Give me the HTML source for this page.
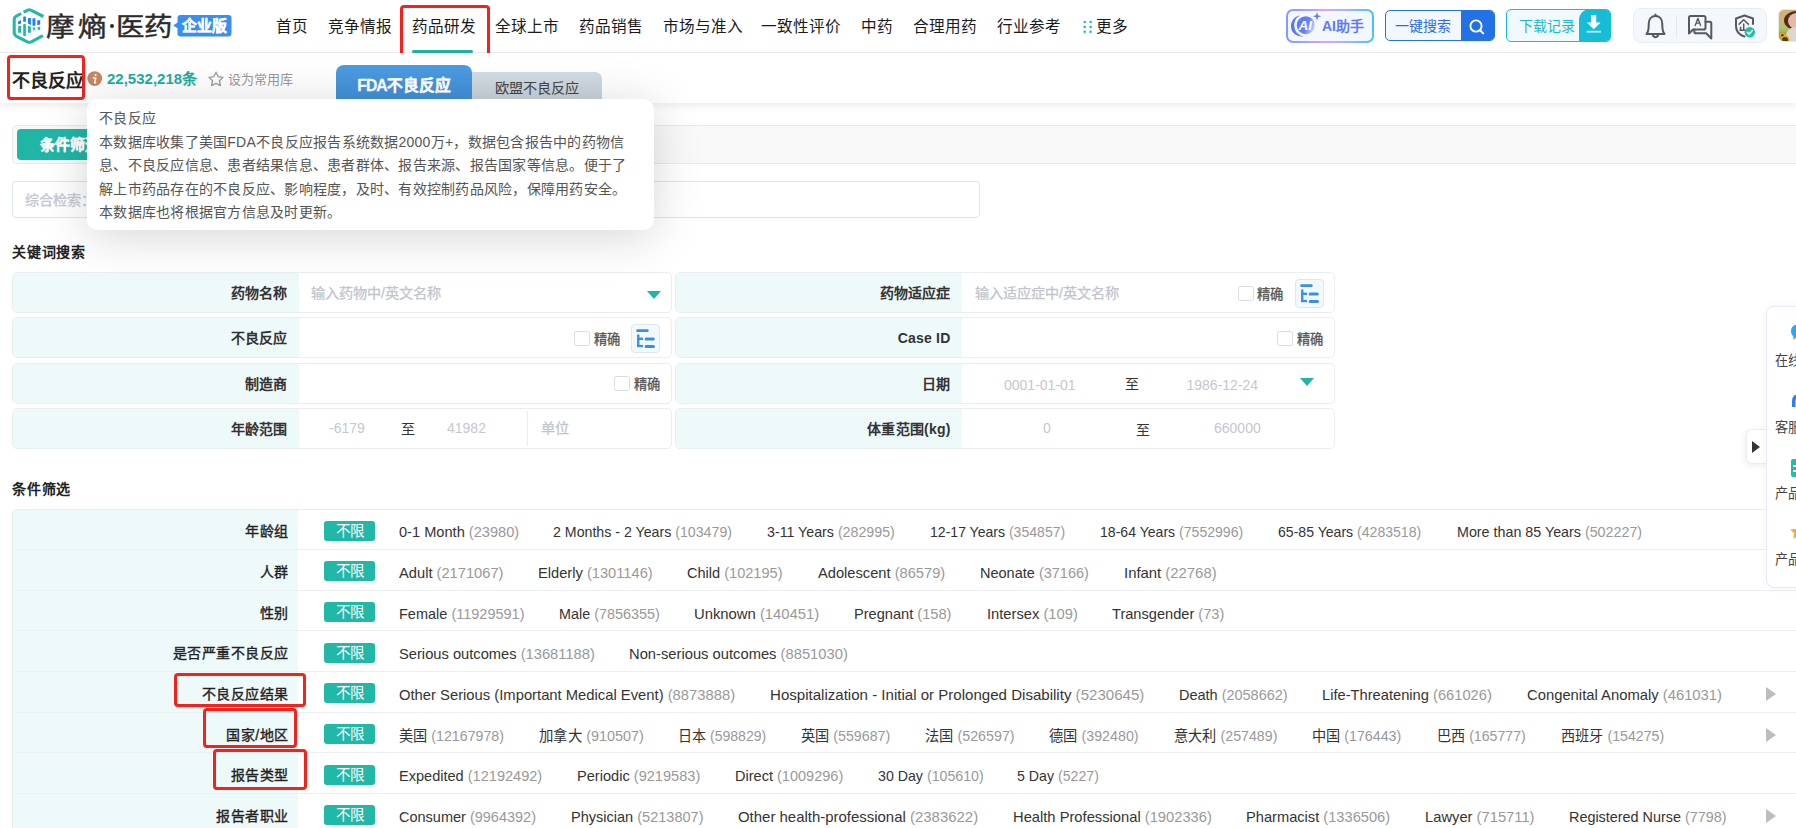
<!DOCTYPE html>
<html lang="zh-CN">
<head>
<meta charset="utf-8">
<style>
*{box-sizing:border-box;margin:0;padding:0}
html,body{width:1796px;height:828px;overflow:hidden;background:#fff}
body{position:relative;font-family:"Liberation Sans",sans-serif;color:#333;font-size:14px}
.a{position:absolute;white-space:nowrap}
/* header */
#hdr{position:absolute;left:0;top:0;width:1796px;height:53px;background:#fff;border-bottom:1px solid #eceef0}
.nav{position:absolute;top:15px;font-size:15.6px;line-height:24px;color:#1a1a1a}
.logo{top:8px;font-size:28.5px;line-height:40px;color:#2b2b2b;-webkit-text-stroke:0.5px #2b2b2b;transform:scaleY(0.92);transform-origin:0 0}

.sec{position:absolute;left:12px;font-size:14px;letter-spacing:0.75px;line-height:20px;font-weight:bold;color:#222}
.kr{position:absolute;height:41px;width:660px;border:1px solid #e9eef0;border-radius:5px;background:#fff;overflow:hidden}
.kr .lb{position:absolute;left:0;top:0;width:286px;height:39px;background:#eef9fa;text-align:right;padding-right:11.5px;font-size:14px;letter-spacing:0.2px;line-height:40px;font-weight:bold;color:#333}
.ph{position:absolute;font-size:14.2px;line-height:20px;color:#c0c4cc;-webkit-text-stroke:0.25px #c0c4cc}
.ph2{position:absolute;font-size:14px;line-height:20px;color:#c0c4cc}
.cb{position:absolute;width:15.5px;height:15px;border:1px solid #d9dce2;border-radius:2.5px;background:#fff}
.cbt{position:absolute;font-size:13.3px;line-height:20px;font-weight:400;-webkit-text-stroke:0.3px #555;color:#555;margin-top:1px}
.tri{position:absolute;width:0;height:0;border-left:7px solid transparent;border-right:7px solid transparent;border-top:8px solid #20b5a5}
.treeb{position:absolute;width:29px;height:29px;border:1px solid #dfe6ee;border-radius:4px;background:#f3f8fc}
.zhi{position:absolute;font-size:14px;line-height:20px;color:#333}

.clb{position:absolute;right:1507.5px;font-size:14px;letter-spacing:0.45px;line-height:20px;font-weight:400;-webkit-text-stroke:0.35px #222;color:#222;white-space:nowrap}
.tag{position:absolute;left:324px;width:51px;height:20px;border-radius:3px;background:#21b8a8;color:#fff;text-align:center;font-size:14.5px;line-height:20px}
.it{position:absolute;font-size:15px;line-height:20px;color:#333;white-space:nowrap;transform-origin:0 0}
.it span{color:#999}
.arr{position:absolute;left:1766px;width:0;height:0;border-top:7px solid transparent;border-bottom:7px solid transparent;border-left:10px solid #bdbdbd}
.redbox{position:absolute;border:3px solid #f5211c;border-radius:4px}
</style>
</head>
<body>
<div id="hdr">
  <!-- logo -->
  <svg class="a" style="left:0;top:0" width="50" height="50" viewBox="0 0 50 50">
    <g fill="none" stroke="#22b9a9" stroke-width="3.1" stroke-linejoin="round" stroke-linecap="butt">
      <path d="M21.2,13.5 L16.2,16.2 Q14.2,17.3 14.2,19.5 L14.2,32.8 Q14.2,35 16.2,36.1 L27.3,41.8 Q29.3,42.8 31.3,41.8 L42.9,35.7"/>
      <path d="M23.6,12.2 L27.3,10.3 Q29.3,9.3 31.3,10.3 L43.4,16.5"/>
    </g>
    <g fill="#1f82ea">
      <path d="M18.1 21.4 L21 20 V23.6 L18.1 24.6Z"/>
      <rect x="23.2" y="16.5" width="2.7" height="5.3" rx="0.6"/>
      <path d="M28 18 H30.9 V25 L28 23.6Z"/>
      <rect x="32.5" y="18.3" width="2.9" height="7.5" rx="0.6"/>
      <path d="M37.3 20.2 H40.2 V24.6 L37.3 25.2Z"/>
    </g>
    <g fill="#22b9a9">
      <path d="M18.1 26.6 L21 25.4 V32.7 H18.1Z"/>
      <rect x="23.2" y="23.9" width="2.7" height="12" rx="0.6"/>
      <path d="M28 25.6 L30.9 26.8 V32.7 H28Z"/>
      <path d="M32.5 27.6 L35.4 27.6 L34.4 30.6 H33.4Z"/>
      <path d="M37.3 27.8 L40.2 26.6 V29.4 L38.6 30.3Z"/>
    </g>
  </svg>
  <div class="a logo" style="left:46px">摩</div>
  <div class="a logo" style="left:78px">熵</div>
  <div class="a" style="left:110px;top:24px;width:4px;height:4px;border-radius:50%;background:#2b2b2b"></div>
  <div class="a logo" style="left:115.5px">医</div>
  <div class="a logo" style="left:143.5px">药</div>
  <svg class="a" style="left:172px;top:14px" width="62" height="24" viewBox="0 0 62 24">
    <path d="M8.5 1 H56.5 Q59.5 1 59.5 4 V19.5 Q59.5 22.5 56.5 22.5 H8.5 Q5.5 22.5 5.5 19.5 V14.2 L1.2 11.4 L5.5 8.6 V4 Q5.5 1 8.5 1Z" fill="#3a8ef0"/>
  </svg>
  <div class="a" style="left:182px;top:14.5px;font-size:14.8px;line-height:23px;font-weight:bold;color:#fff;-webkit-text-stroke:0.4px #fff">企业版</div>

  <div class="nav a" style="left:276px">首页</div>
  <div class="nav a" style="left:328px">竞争情报</div>
  <div class="nav a" style="left:411.5px">药品研发</div>
  <div class="nav a" style="left:495px">全球上市</div>
  <div class="nav a" style="left:579px">药品销售</div>
  <div class="nav a" style="left:663px">市场与准入</div>
  <div class="nav a" style="left:761px">一致性评价</div>
  <div class="nav a" style="left:860.5px">中药</div>
  <div class="nav a" style="left:913px">合理用药</div>
  <div class="nav a" style="left:997px">行业参考</div>
  <svg class="a" style="left:1082px;top:19px" width="12" height="16" viewBox="0 0 12 16">
    <g fill="#22b8a9"><circle cx="2.7" cy="3.1" r="1.25"/><circle cx="8.6" cy="3.1" r="1.25"/><circle cx="2.7" cy="8" r="1.25"/><circle cx="8.6" cy="8" r="1.25"/><circle cx="2.7" cy="12.8" r="1.25"/><circle cx="8.6" cy="12.8" r="1.25"/></g>
  </svg>
  <div class="nav a" style="left:1095.5px">更多</div>

  <!-- AI button -->
  <div class="a" style="left:1286px;top:9px;width:88px;height:34px;border-radius:7px;padding:2px;background:linear-gradient(90deg,#7f9bff 0%,#a7a4ff 25%,#e0a3f7 45%,#9fb6ff 70%,#3fc4ff 100%)">
    <div style="width:84px;height:30px;border-radius:5px;background:#f3f7fe"></div>
  </div>
  <svg class="a" style="left:1286px;top:8px" width="40" height="34" viewBox="0 0 40 34">
    <defs>
      <linearGradient id="aig" x1="0" y1="0.3" x2="1" y2="0.7"><stop offset="0" stop-color="#5f78f7"/><stop offset="0.55" stop-color="#6580f8"/><stop offset="1" stop-color="#d2d5fc"/></linearGradient>
      <clipPath id="aicl"><rect x="0" y="0" width="28.7" height="34"/></clipPath>
    </defs>
    <path d="M13.8 7.4 A10.5 10.5 0 0 0 17.4 28.4 A11.4 11.4 0 0 1 13.8 7.4Z" fill="#5c74f6"/>
    <circle cx="19.8" cy="17.2" r="9" fill="url(#aig)" clip-path="url(#aicl)"/>
    <text x="12.6" y="21.8" font-family="Liberation Sans" font-weight="bold" font-style="italic" font-size="13.5" fill="#fff">AI</text>
    <path d="M31 4 L32 7.2 L35.2 8.2 L32 9.2 L31 12.4 L30 9.2 L26.8 8.2 L30 7.2Z" fill="#5f7cf7"/>
  </svg>
  <div class="a" style="left:1322px;top:15px;font-size:14px;line-height:22px;font-weight:bold;color:#5d7bf7">AI助手</div>

  <!-- search -->
  <div class="a" style="left:1385px;top:10px;width:110px;height:31px;border:1px solid #2671e4;border-radius:5px;background:#f3f8fe;overflow:hidden">
    <div class="a" style="left:75px;top:0;width:34px;height:29px;background:#2372e5"></div>
  </div>
  <div class="a" style="left:1395px;top:15px;font-size:14px;line-height:22px;color:#2a6fe0">一键搜索</div>
  <svg class="a" style="left:1460px;top:10px" width="35" height="31" viewBox="0 0 35 31">
    <circle cx="16" cy="16" r="5.6" fill="none" stroke="#fff" stroke-width="1.9"/>
    <path d="M20 20.2 L23.2 23.4" stroke="#fff" stroke-width="2" stroke-linecap="round"/>
  </svg>

  <!-- download -->
  <div class="a" style="left:1506px;top:9px;width:105px;height:33px;border:1px solid #19bdd6;border-radius:5px;background:#f0fafc;overflow:hidden">
    <div class="a" style="left:72px;top:-1px;width:33px;height:33px;background:#17bcd6;border-top-left-radius:11px"></div>
  </div>
  <div class="a" style="left:1519px;top:15px;font-size:14px;line-height:22px;color:#1fb7cf">下载记录</div>
  <svg class="a" style="left:1579px;top:9px" width="32" height="33" viewBox="0 0 32 33">
    <path d="M12.2 6 H17.2 V13.6 H21.6 L14.7 20.3 L7.8 13.6 H12.2Z" fill="#fff"/>
    <rect x="7.6" y="21.8" width="14.4" height="1.8" fill="#c9eef4"/>
  </svg>

  <!-- icon group -->
  <div class="a" style="left:1633px;top:8px;width:134px;height:35px;border:1px solid #e8eef6;border-radius:8px;background:#f4f7fc"></div>
  <svg class="a" style="left:1633px;top:8px" width="134" height="35" viewBox="0 0 134 35">
    <g fill="none" stroke="#555a5e" stroke-width="2" stroke-linejoin="round" stroke-linecap="round">
      <path d="M13.5 26 C16 23 15.7 20 15.7 16 C15.7 11 18.5 8 22.5 8 C26.5 8 29.3 11 29.3 16 C29.3 20 29 23 31.5 26 Z"/>
      <path d="M20 27.8 Q22.5 30.5 25 27.8"/>
      <path d="M22.5 6.5 V8"/>
      <path d="M56 25.5 V9.8 Q56 8 57.8 8 H70.7 Q72.5 8 72.5 9.8 V19.7 Q72.5 21.5 70.7 21.5 H60 Z"/>
      <path d="M72.5 13.8 H76.5 Q78.3 13.8 78.3 15.6 V30.5 L73.2 25.2 H63.1 Q61.3 25.2 61.3 23.4 V21.5"/>
      <path d="M62.2 17.6 L64.9 10.3 L67.6 17.6 M63.2 15.2 H66.6" stroke-width="1.3"/>
      <path d="M111.5 7.5 L103 10.5 V18 C103 23.5 106.5 27 111.5 28.5 M111.5 7.5 L120 10.5 V16"/>
    </g>
    <g fill="none" stroke="#555a5e" stroke-width="1.5" stroke-linejoin="round">
      <path d="M105.6 16.6 L110.7 11.8 L115.8 16.6"/>
      <path d="M110.7 15.5 V22.2 M107.6 18.8 V22.2 M106.5 22.2 H114.5"/>
    </g>
    <line x1="43.5" y1="9" x2="43.5" y2="29" stroke="#e3e8ef" stroke-width="1"/>
    <circle cx="116.8" cy="24.2" r="5.2" fill="#22bea4"/>
    <path d="M114.3 24.3 L116.2 26.1 L119.4 22.6" fill="none" stroke="#fff" stroke-width="1.5" stroke-linecap="round" stroke-linejoin="round"/>
  </svg>
  <!-- avatar -->
  <div class="a" style="left:1777.5px;top:9px;width:32px;height:33px;border:1px solid #d5efef;border-radius:6px;overflow:hidden;background:linear-gradient(180deg,#d8ad6e 0%,#d2b379 38%,#b5c165 58%,#9cb650 75%,#88a444 100%)">
    <div class="a" style="left:5.5px;top:1px;width:26px;height:19px;border-radius:50%;background:#4b2d22"></div>
    <div class="a" style="left:9px;top:3px;width:18px;height:16px;border-radius:50%;background:#e8b8a6"></div>
    <div class="a" style="left:7px;top:17px;width:24px;height:18px;border-radius:9px 9px 0 0;background:#dcd6d1"></div>
    <div class="a" style="left:0px;top:22px;width:7px;height:7px;border-radius:50%;background:#c9a12a;box-shadow:inset 0 0 0 2px #d9ae2c,inset 0 0 0 4px #5a3a12"></div>
    <div class="a" style="left:3px;top:27px;width:6px;height:6px;border-radius:50%;background:#5a3a12;box-shadow:0 0 0 1.5px #d9ae2c"></div>
  </div>
  <div class="a" style="left:412px;top:50px;width:61px;height:3px;border-radius:2px;background:#1fb5a6"></div>
</div>
<div class="redbox" style="left:400px;top:5px;width:90px;height:52px"></div>

<!-- subheader -->
<div class="a" style="left:0;top:53px;width:1796px;height:50px;background:#fff;box-shadow:0 3px 7px rgba(0,0,0,0.075)"></div>
<div class="a" style="left:12px;top:68px;font-size:18px;line-height:26px;font-weight:bold;color:#222">不良反应</div>
<svg class="a" style="left:87px;top:71px" width="16" height="16" viewBox="0 0 16 16">
  <circle cx="7.7" cy="7.6" r="7.4" fill="#c98460"/>
  <circle cx="8.6" cy="4" r="1.1" fill="#fff"/>
  <path d="M6.3 7 H8.8 L7.6 11.4 Q7.4 12.3 8.6 11.6" fill="none" stroke="#fff" stroke-width="1.5" stroke-linecap="round" stroke-linejoin="round"/>
</svg>
<div class="a" style="left:107px;top:68px;font-size:15px;line-height:22px;font-weight:bold;color:#22ad9f">22,532,218条</div>
<svg class="a" style="left:207px;top:71px" width="18" height="17" viewBox="0 0 18 17">
  <path d="M9 1.2 L11.1 5.7 L16 6.3 L12.4 9.7 L13.4 14.6 L9 12.2 L4.6 14.6 L5.6 9.7 L2 6.3 L6.9 5.7Z" fill="none" stroke="#9a9a9a" stroke-width="1.3" stroke-linejoin="round"/>
</svg>
<div class="a" style="left:228px;top:70px;font-size:13px;line-height:20px;color:#999">设为常用库</div>
<div class="a" style="left:336px;top:65px;width:136px;height:34px;border-radius:8px 8px 0 0;background:linear-gradient(180deg,#4c9be0,#4190d8)"></div>
<div class="a" style="left:336px;top:74px;width:136px;text-align:center;font-size:15.7px;line-height:24px;font-weight:bold;color:#fff;-webkit-text-stroke:0.3px #fff"><span style="letter-spacing:-0.9px">FDA</span>不良反应</div>
<div class="a" style="left:472px;top:72px;width:130px;height:27px;border-radius:0 7px 0 0;background:linear-gradient(180deg,#d3dce3,#c8d2da)"></div>
<div class="a" style="left:472px;top:77px;width:130px;padding-left:22.5px;font-size:14.2px;line-height:22px;color:#444">欧盟不良反应</div>
<div class="redbox" style="left:7px;top:55px;width:78px;height:45px"></div>

<!-- filter bar -->
<div class="a" style="left:12px;top:125px;width:1800px;height:39px;border:1px solid #e8ebee;border-radius:4px;background:#f9f9fa"></div>
<div class="a" style="left:17px;top:129px;width:116px;height:31px;border-radius:4px;background:#20b6a6"></div>
<div class="a" style="left:40px;top:134px;font-size:15px;line-height:22px;font-weight:bold;color:#fff;-webkit-text-stroke:0.3px #fff">条件筛选</div>
<div class="a" style="left:12px;top:181px;width:968px;height:37px;border:1px solid #dce8e6;border-radius:4px;background:#fff"></div>
<div class="a" style="left:25px;top:189px;font-size:14.2px;line-height:22px;color:#c4c9d1;-webkit-text-stroke:0.3px #c4c9d1">综合检索：</div>


<!-- keyword search -->
<div class="sec" style="top:242px">关键词搜索</div>
<div class="kr" style="left:12px;top:272px"><div class="lb">药物名称</div></div>
<div class="kr" style="left:675px;top:272px"><div class="lb">药物适应症</div></div>
<div class="kr" style="left:12px;top:317px"><div class="lb">不良反应</div></div>
<div class="kr" style="left:675px;top:317px"><div class="lb">Case ID</div></div>
<div class="kr" style="left:12px;top:363px"><div class="lb">制造商</div></div>
<div class="kr" style="left:675px;top:363px"><div class="lb">日期</div></div>
<div class="kr" style="left:12px;top:408px"><div class="lb">年龄范围</div></div>
<div class="kr" style="left:675px;top:408px"><div class="lb">体重范围(kg)</div></div>
<div class="ph" style="left:311px;top:283px">输入药物中/英文名称</div>
<div class="tri" style="left:647px;top:291px"></div>
<div class="ph" style="left:975px;top:283px">输入适应症中/英文名称</div>
<div class="cb" style="left:1238px;top:286px"></div><div class="cbt" style="left:1257px;top:284px">精确</div>
<div class="treeb" style="left:1295px;top:279px"></div><svg class="a" style="left:1295px;top:279px" width="29" height="29" viewBox="0 0 29 29"><g fill="#3a8fe0"><rect x="5.2" y="5.2" width="12.5" height="2.9" rx="1.45"/><rect x="6.1" y="10.2" width="2.3" height="12.9" rx="1.1"/><rect x="6.1" y="13.6" width="5.9" height="2.4"/><rect x="13.6" y="13.5" width="10.2" height="3" rx="1.5"/><rect x="6.1" y="20.9" width="5.9" height="2.3"/><rect x="13.6" y="21" width="10.4" height="3" rx="1.5"/></g></svg>
<div class="cb" style="left:574px;top:331px"></div><div class="cbt" style="left:594px;top:329px">精确</div>
<div class="treeb" style="left:631px;top:324px"></div><svg class="a" style="left:631px;top:324px" width="29" height="29" viewBox="0 0 29 29"><g fill="#3a8fe0"><rect x="5.2" y="5.2" width="12.5" height="2.9" rx="1.45"/><rect x="6.1" y="10.2" width="2.3" height="12.9" rx="1.1"/><rect x="6.1" y="13.6" width="5.9" height="2.4"/><rect x="13.6" y="13.5" width="10.2" height="3" rx="1.5"/><rect x="6.1" y="20.9" width="5.9" height="2.3"/><rect x="13.6" y="21" width="10.4" height="3" rx="1.5"/></g></svg>
<div class="cb" style="left:1277px;top:331px"></div><div class="cbt" style="left:1297px;top:329px">精确</div>
<div class="cb" style="left:614px;top:376px"></div><div class="cbt" style="left:634px;top:374px">精确</div>
<div class="ph2" style="left:1004px;top:375px;color:#c5c8ce;font-size:14px">0001-01-01</div>
<div class="zhi" style="left:1125px;top:374px">至</div>
<div class="ph2" style="left:1186.5px;top:375px;color:#c5c8ce;font-size:14px">1986-12-24</div>
<div class="tri" style="left:1300px;top:378px"></div>
<div class="ph2" style="left:329px;top:418px;color:#c5c8ce">-6179</div>
<div class="zhi" style="left:401px;top:419px">至</div>
<div class="ph2" style="left:447px;top:418px;color:#c5c8ce">41982</div>
<div class="a" style="left:527px;top:411px;width:1px;height:35px;background:#e8ecf0"></div>
<div class="ph" style="left:541px;top:418px">单位</div>
<div class="ph2" style="left:1043px;top:418px;color:#c5c8ce">0</div>
<div class="zhi" style="left:1136px;top:420px">至</div>
<div class="ph2" style="left:1214px;top:418px;color:#c5c8ce">660000</div>

<!-- condition table -->
<div class="sec" style="top:479px">条件筛选</div>
<div class="a" style="left:12px;top:509px;width:1800px;height:330px;border-top:1px solid #e8eef0;border-left:1px solid #e8eef0;border-radius:5px 0 0 0;background:#fff"></div>
<div class="a" style="left:13px;top:510px;width:285px;height:330px;background:#eef9fa;border-radius:4px 0 0 0"></div>
<div class="clb" style="top:521.20px">年龄组</div>
<div class="tag" style="top:520.60px">不限</div>
<div class="it" style="left:398.6px;top:522.30px;transform:scaleX(0.9739)">0-1 Month <span>(23980)</span></div>
<div class="it" style="left:553.2px;top:522.30px;transform:scaleX(0.9456)">2 Months - 2 Years <span>(103479)</span></div>
<div class="it" style="left:766.7px;top:522.30px;transform:scaleX(0.9479)">3-11 Years <span>(282995)</span></div>
<div class="it" style="left:930.0px;top:522.30px;transform:scaleX(0.9370)">12-17 Years <span>(354857)</span></div>
<div class="it" style="left:1100.0px;top:522.30px;transform:scaleX(0.9382)">18-64 Years <span>(7552996)</span></div>
<div class="it" style="left:1278.2px;top:522.30px;transform:scaleX(0.9382)">65-85 Years <span>(4283518)</span></div>
<div class="it" style="left:1456.7px;top:522.30px;transform:scaleX(0.9526)">More than 85 Years <span>(502227)</span></div>
<div class="a" style="left:15px;top:549px;width:283px;height:1px;background:#edf0f2"></div>
<div class="a" style="left:298px;top:549px;width:1500px;height:1px;background:#ebeff1"></div>
<div class="clb" style="top:561.86px">人群</div>
<div class="tag" style="top:561.26px">不限</div>
<div class="it" style="left:398.6px;top:562.96px;transform:scaleX(0.9789)">Adult <span>(2171067)</span></div>
<div class="it" style="left:537.9px;top:562.96px;transform:scaleX(0.9777)">Elderly <span>(1301146)</span></div>
<div class="it" style="left:687.4px;top:562.96px;transform:scaleX(0.9705)">Child <span>(102195)</span></div>
<div class="it" style="left:817.5px;top:562.96px;transform:scaleX(0.9778)">Adolescent <span>(86579)</span></div>
<div class="it" style="left:979.6px;top:562.96px;transform:scaleX(0.9672)">Neonate <span>(37166)</span></div>
<div class="it" style="left:1123.6px;top:562.96px;transform:scaleX(0.9914)">Infant <span>(22768)</span></div>
<div class="a" style="left:15px;top:590px;width:283px;height:1px;background:#edf0f2"></div>
<div class="a" style="left:298px;top:590px;width:1500px;height:1px;background:#ebeff1"></div>
<div class="clb" style="top:602.52px">性别</div>
<div class="tag" style="top:601.92px">不限</div>
<div class="it" style="left:398.6px;top:603.62px;transform:scaleX(0.9668)">Female <span>(11929591)</span></div>
<div class="it" style="left:558.7px;top:603.62px;transform:scaleX(0.9583)">Male <span>(7856355)</span></div>
<div class="it" style="left:694.1px;top:603.62px;transform:scaleX(0.9878)">Unknown <span>(140451)</span></div>
<div class="it" style="left:854.3px;top:603.62px;transform:scaleX(0.9742)">Pregnant <span>(158)</span></div>
<div class="it" style="left:986.7px;top:603.62px;transform:scaleX(0.9810)">Intersex <span>(109)</span></div>
<div class="it" style="left:1112.2px;top:603.62px;transform:scaleX(0.9735)">Transgender <span>(73)</span></div>
<div class="a" style="left:15px;top:630px;width:283px;height:1px;background:#edf0f2"></div>
<div class="a" style="left:298px;top:630px;width:1500px;height:1px;background:#ebeff1"></div>
<div class="clb" style="top:643.18px">是否严重不良反应</div>
<div class="tag" style="top:642.58px">不限</div>
<div class="it" style="left:398.6px;top:644.28px;transform:scaleX(0.9797)">Serious outcomes <span>(13681188)</span></div>
<div class="it" style="left:629.2px;top:644.28px;transform:scaleX(0.9828)">Non-serious outcomes <span>(8851030)</span></div>
<div class="a" style="left:15px;top:671px;width:283px;height:1px;background:#edf0f2"></div>
<div class="a" style="left:298px;top:671px;width:1500px;height:1px;background:#ebeff1"></div>
<div class="clb" style="top:683.84px">不良反应结果</div>
<div class="tag" style="top:683.24px">不限</div>
<div class="it" style="left:398.6px;top:684.94px;transform:scaleX(0.9856)">Other Serious (Important Medical Event) <span>(8873888)</span></div>
<div class="it" style="left:770.0px;top:684.94px;transform:scaleX(1.0043)">Hospitalization - Initial or Prolonged Disability <span>(5230645)</span></div>
<div class="it" style="left:1178.7px;top:684.94px;transform:scaleX(0.9645)">Death <span>(2058662)</span></div>
<div class="it" style="left:1322.0px;top:684.94px;transform:scaleX(0.9789)">Life-Threatening <span>(661026)</span></div>
<div class="it" style="left:1526.5px;top:684.94px;transform:scaleX(0.9866)">Congenital Anomaly <span>(461031)</span></div>
<div class="arr" style="top:687.14px"></div>
<div class="a" style="left:15px;top:712px;width:283px;height:1px;background:#edf0f2"></div>
<div class="a" style="left:298px;top:712px;width:1500px;height:1px;background:#ebeff1"></div>
<div class="clb" style="top:724.50px">国家/地区</div>
<div class="tag" style="top:723.90px">不限</div>
<div class="it" style="left:398.6px;top:725.60px;transform:scaleX(0.9467)">美国 <span>(12167978)</span></div>
<div class="it" style="left:538.5px;top:725.60px;transform:scaleX(0.9595)">加拿大 <span>(910507)</span></div>
<div class="it" style="left:678.2px;top:725.60px;transform:scaleX(0.9361)">日本 <span>(598829)</span></div>
<div class="it" style="left:801.3px;top:725.60px;transform:scaleX(0.9467)">英国 <span>(559687)</span></div>
<div class="it" style="left:925.4px;top:725.60px;transform:scaleX(0.9510)">法国 <span>(526597)</span></div>
<div class="it" style="left:1049.4px;top:725.60px;transform:scaleX(0.9510)">德国 <span>(392480)</span></div>
<div class="it" style="left:1174.1px;top:725.60px;transform:scaleX(0.9467)">意大利 <span>(257489)</span></div>
<div class="it" style="left:1312.2px;top:725.60px;transform:scaleX(0.9467)">中国 <span>(176443)</span></div>
<div class="it" style="left:1436.8px;top:725.60px;transform:scaleX(0.9414)">巴西 <span>(165777)</span></div>
<div class="it" style="left:1560.8px;top:725.60px;transform:scaleX(0.9440)">西班牙 <span>(154275)</span></div>
<div class="arr" style="top:727.80px"></div>
<div class="a" style="left:15px;top:752px;width:283px;height:1px;background:#edf0f2"></div>
<div class="a" style="left:298px;top:752px;width:1500px;height:1px;background:#ebeff1"></div>
<div class="clb" style="top:765.16px">报告类型</div>
<div class="tag" style="top:764.56px">不限</div>
<div class="it" style="left:398.6px;top:766.26px;transform:scaleX(0.9700)">Expedited <span>(12192492)</span></div>
<div class="it" style="left:576.8px;top:766.26px;transform:scaleX(0.9728)">Periodic <span>(9219583)</span></div>
<div class="it" style="left:734.8px;top:766.26px;transform:scaleX(0.9693)">Direct <span>(1009296)</span></div>
<div class="it" style="left:877.8px;top:766.26px;transform:scaleX(0.9459)">30 Day <span>(105610)</span></div>
<div class="it" style="left:1017.3px;top:766.26px;transform:scaleX(0.9444)">5 Day <span>(5227)</span></div>
<div class="a" style="left:15px;top:793px;width:283px;height:1px;background:#edf0f2"></div>
<div class="a" style="left:298px;top:793px;width:1500px;height:1px;background:#ebeff1"></div>
<div class="clb" style="top:805.82px">报告者职业</div>
<div class="tag" style="top:805.22px">不限</div>
<div class="it" style="left:398.6px;top:806.92px;transform:scaleX(0.9665)">Consumer <span>(9964392)</span></div>
<div class="it" style="left:570.7px;top:806.92px;transform:scaleX(0.9688)">Physician <span>(5213807)</span></div>
<div class="it" style="left:737.9px;top:806.92px;transform:scaleX(0.9963)">Other health-professional <span>(2383622)</span></div>
<div class="it" style="left:1012.7px;top:806.92px;transform:scaleX(0.9815)">Health Professional <span>(1902336)</span></div>
<div class="it" style="left:1246.1px;top:806.92px;transform:scaleX(0.9763)">Pharmacist <span>(1336506)</span></div>
<div class="it" style="left:1424.5px;top:806.92px;transform:scaleX(0.9823)">Lawyer <span>(715711)</span></div>
<div class="it" style="left:1569.1px;top:806.92px;transform:scaleX(0.9595)">Registered Nurse <span>(7798)</span></div>
<div class="arr" style="top:809.12px"></div>

<!-- red boxes table -->
<div class="redbox" style="left:174px;top:673px;width:132px;height:34px"></div>
<div class="redbox" style="left:203px;top:708px;width:94px;height:40px"></div>
<div class="redbox" style="left:213px;top:749px;width:94px;height:41px"></div>

<!-- right float sidebar -->
<div class="a" style="left:1746px;top:429px;width:24px;height:35px;border:1px solid #e9eef5;border-right:none;border-radius:6px 0 0 6px;background:#fff;box-shadow:-2px 2px 6px rgba(0,0,0,0.06)"></div>
<div class="a" style="left:1752px;top:441px;width:0;height:0;border-top:6.5px solid transparent;border-bottom:6.5px solid transparent;border-left:8.5px solid #333"></div>
<div class="a" style="left:1766px;top:306px;width:60px;height:282px;border:1px solid #e6ecf5;border-radius:8px;background:#fff;box-shadow:0 0 8px rgba(0,40,120,0.05)"></div>
<svg class="a" style="left:1789px;top:322px" width="10" height="20" viewBox="0 0 10 20"><path d="M9 2.5 C4.5 2.5 2 5.3 2 9 C2 11.8 3.3 13.5 4.5 14.5 L4.2 17.5 L7.5 15.5 C8 15.6 8.5 15.6 9 15.6Z" fill="#27a9f5"/></svg>
<div class="a" style="left:1775px;top:351px;font-size:13.2px;line-height:20px;color:#444">在线</div>
<svg class="a" style="left:1789px;top:391px" width="10" height="18" viewBox="0 0 10 18"><path d="M10 3 C5.5 3 3 6 3 10 V16 H6.5 V10.5 C6.5 8 8 6.6 10 6.6Z" fill="#2f80ea"/></svg>
<div class="a" style="left:1775px;top:418px;font-size:13.2px;line-height:20px;color:#444">客服</div>
<div class="a" style="left:1791px;top:459px;width:12px;height:18px;border-radius:2px;background:#1fbfa3"></div>
<div class="a" style="left:1793px;top:465px;width:6px;height:2px;background:#fff"></div>
<div class="a" style="left:1793px;top:470px;width:6px;height:2px;background:#fff"></div>
<div class="a" style="left:1775px;top:484px;font-size:13.2px;line-height:20px;color:#444">产品</div>
<svg class="a" style="left:1789px;top:523px" width="18" height="18" viewBox="0 0 18 18"><path d="M9 1 L11.3 6 L16.8 6.6 L12.7 10.3 L13.8 15.8 L9 13 L4.2 15.8 L5.3 10.3 L1.2 6.6 L6.7 6Z" fill="#f7a928"/></svg>
<div class="a" style="left:1775px;top:550px;font-size:13.2px;line-height:20px;color:#444">产品</div>

<!-- tooltip -->
<div class="a" style="left:87px;top:99px;width:567px;height:131px;border-radius:10px;background:#fff;box-shadow:0 6px 48px rgba(0,0,0,0.17);padding:8px 0 0 12px;font-size:14px;line-height:23.6px;color:#555;white-space:normal;letter-spacing:0.25px">
不良反应<br>本数据库收集了美国FDA不良反应报告系统数据2000万+，数据包含报告中的药物信<br>息、不良反应信息、患者结果信息、患者群体、报告来源、报告国家等信息。便于了<br>解上市药品存在的不良反应、影响程度，及时、有效控制药品风险，保障用药安全。<br>本数据库也将根据官方信息及时更新。
</div>
</body>
</html>
